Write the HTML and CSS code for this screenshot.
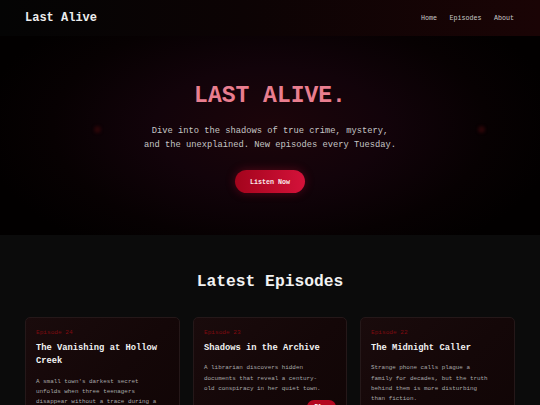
FILE: index.html
```html
<!DOCTYPE html>
<html lang="en">
<head>
<meta charset="utf-8">
<title>Last Alive</title>
<link rel="stylesheet" href="styles.css">
</head>
<body>
<header class="site-header">
  <div class="logo">Last Alive</div>
  <nav class="nav">
    <a href="#">Home</a>
    <a href="#">Episodes</a>
    <a href="#">About</a>
  </nav>
</header>
<section class="hero">
  <span class="dot dot-left"></span>
  <span class="dot dot-right"></span>
  <h1 class="hero-title">LAST ALIVE.</h1>
  <p class="hero-sub">Dive into the shadows of true crime, mystery,<br>and the unexplained. New episodes every Tuesday.</p>
  <a class="btn-primary" href="#">Listen Now</a>
</section>
<section class="episodes">
  <h2 class="section-title">Latest Episodes</h2>
  <div class="grid">
    <article class="card">
      <div class="ep-num">Episode 24</div>
      <h3 class="ep-title">The Vanishing at Hollow Creek</h3>
      <p class="ep-desc">A small town's darkest secret unfolds when three teenagers disappear without a trace during a storm.</p>
      <div class="card-foot"><a class="btn-play" href="#">Play</a></div>
    </article>
    <article class="card">
      <div class="ep-num">Episode 23</div>
      <h3 class="ep-title">Shadows in the Archive</h3>
      <p class="ep-desc">A librarian discovers hidden documents that reveal a century-old conspiracy in her quiet town.</p>
      <div class="card-foot"><a class="btn-play" href="#">Play</a></div>
    </article>
    <article class="card">
      <div class="ep-num">Episode 22</div>
      <h3 class="ep-title">The Midnight Caller</h3>
      <p class="ep-desc">Strange phone calls plague a family for decades, but the truth behind them is more disturbing than fiction.</p>
      <div class="card-foot"><a class="btn-play" href="#">Play</a></div>
    </article>
  </div>
</section>
</body>
</html>
```
FILE: styles.css
```css
* { box-sizing: border-box; }
html, body { margin: 0; padding: 0; }
body {
  height: 405px;
  overflow: hidden;
  background: #0b0b0b;
  font-family: "Courier New", "Nimbus Mono PS", "FreeMono", "Liberation Mono", monospace;
  color: #e8e8e8;
}
a { text-decoration: none; color: inherit; }

.site-header {
  height: 36px;
  display: flex;
  align-items: center;
  justify-content: space-between;
  padding: 0 26px 1px 25px;
  background: linear-gradient(90deg, #040404 0%, #0c0304 45%, #1a0405 100%);
}
.logo {
  font-size: 12px;
  font-weight: bold;
  color: #ededed;
}
.nav {
  display: flex;
  gap: 12.5px;
  font-size: 6.67px;
  color: #c9c9c9;
}
.nav a { color: #c9c9c9; }

.hero {
  position: relative;
  height: 199px;
  display: flex;
  flex-direction: column;
  align-items: center;
  padding-top: 46px;
  background:
    radial-gradient(ellipse 290px 150px at 50% 46%, #1c050a 0%, #12030a 40%, #070102 75%, #020000 100%);
  background-color: #000;
}
.dot {
  position: absolute;
  top: 90px;
  width: 7px;
  height: 7px;
  border-radius: 50%;
  background: #2a0508;
  filter: blur(1.5px);
}
.dot-left { left: 94px; }
.dot-right { left: 478px; }
.hero-title {
  margin: 0;
  font-size: 23px;
  line-height: 28px;
  font-weight: bold;
  color: #e97e8f;
}
.hero-sub {
  margin: 14px 0 0;
  font-size: 8.75px;
  line-height: 14px;
  color: #c6c6c6;
  text-align: center;
}
.btn-primary {
  margin-top: 18px;
  width: 70px;
  height: 23px;
  border-radius: 12px;
  display: flex;
  align-items: center;
  justify-content: center;
  font-size: 6.67px;
  font-weight: bold;
  color: #fbe9ec;
  background: linear-gradient(90deg, #a3041c 0%, #d4123a 100%);
  box-shadow: 0 0 10px rgba(200, 16, 50, 0.35);
}

.episodes {
  padding: 37px 25px 0;
  background: #0b0b0b;
}
.section-title {
  margin: 0;
  text-align: center;
  font-size: 16.3px;
  line-height: 20px;
  font-weight: bold;
  color: #f2f2f2;
}
.grid {
  margin-top: 25px;
  display: grid;
  grid-template-columns: 155px 154px 155px;
  column-gap: 13px;
}
.card {
  border: 1px solid #251819;
  border-radius: 5px;
  padding: 10px 21px 12px 10px;
  background: linear-gradient(135deg, #1a0b0c 0%, #140708 50%, #100505 100%);
  height: 140px;
}
.ep-num {
  font-size: 6.1px;
  line-height: 9px;
  color: #7e0a10;
}
.ep-title {
  margin: 5px 0 0;
  font-size: 8.77px;
  line-height: 13.3px;
  font-weight: bold;
  color: #f2f2f2;
}
.ep-desc {
  margin: 8px 0 0;
  font-size: 5.9px;
  line-height: 10.2px;
  color: #a9a9a9;
}
.card-foot {
  margin-top: 6px;
  margin-right: -11px;
  display: flex;
  align-items: center;
  justify-content: flex-end;
}
.btn-play {
  width: 29px;
  height: 14px;
  border-radius: 7px;
  background: #b3071f;
  font-size: 5.9px;
  font-weight: bold;
  color: #fff;
  display: flex;
  align-items: center;
  justify-content: center;
}
```
